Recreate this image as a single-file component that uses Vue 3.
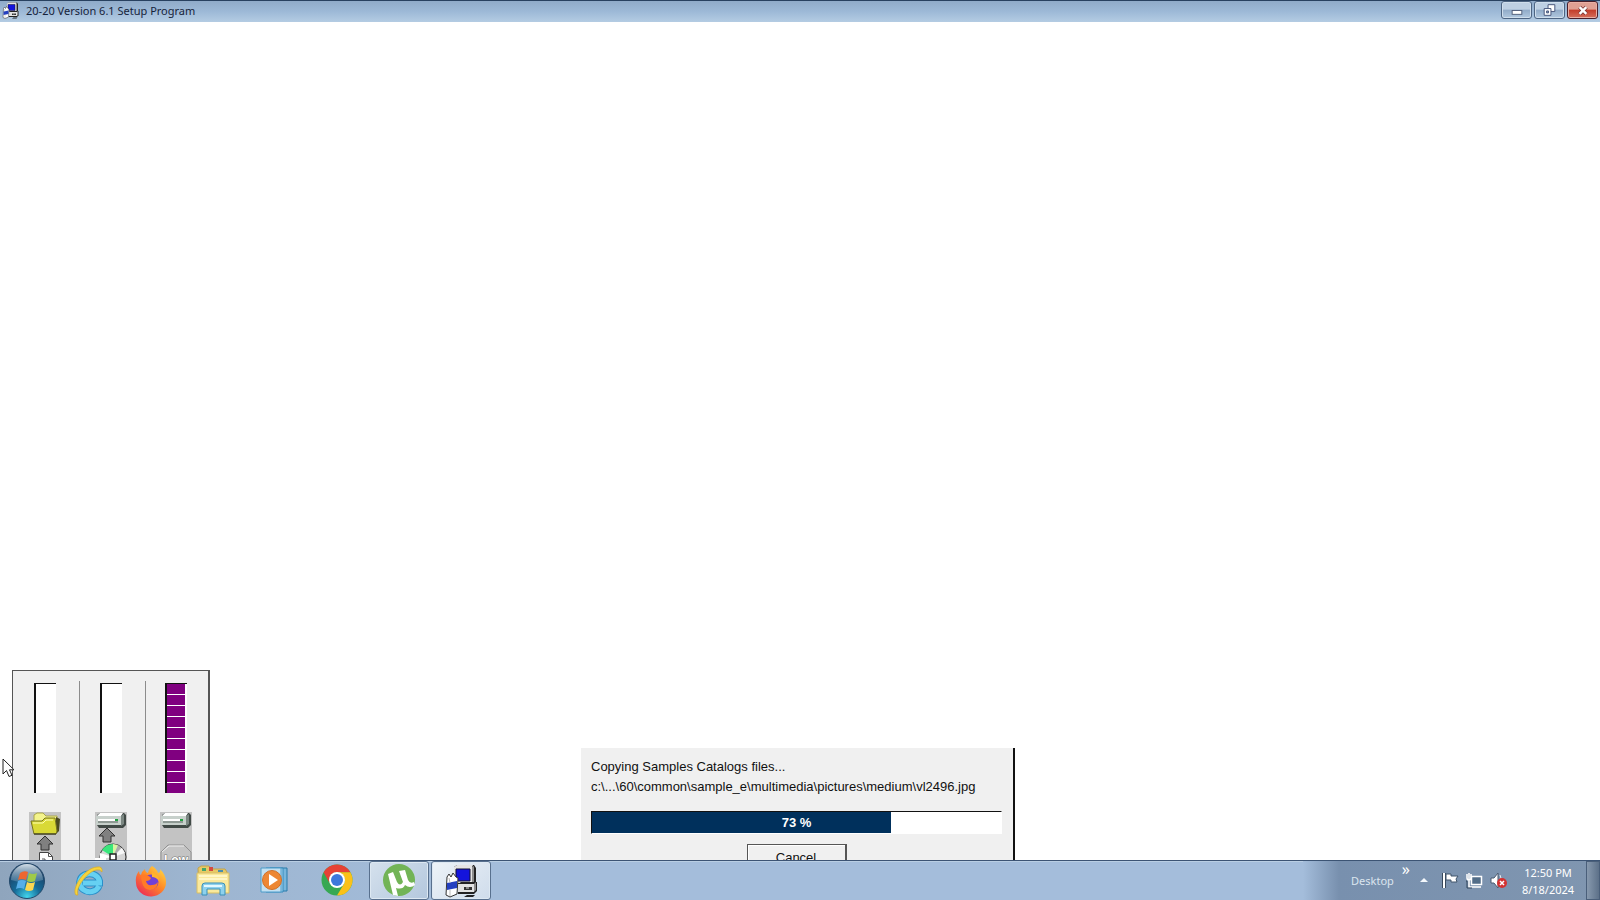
<script setup>
import { ref } from 'vue'

const percent = ref(73)
const gauges = [
  { id: 'file', label: 'File progress', segments: 0 },
  { id: 'disk', label: 'Disk progress', segments: 0 },
  { id: 'space', label: 'Disk space', segments: 10 },
]
const apps = [
  { id: 'ie', name: 'Internet Explorer', open: false },
  { id: 'firefox', name: 'Firefox', open: false },
  { id: 'explorer', name: 'Windows Explorer', open: false },
  { id: 'wmp', name: 'Windows Media Player', open: false },
  { id: 'chrome', name: 'Google Chrome', open: false },
  { id: 'utorrent', name: 'uTorrent', open: true },
  { id: 'setup', name: '20-20 Setup', open: true },
]
</script>

<template>
  <div class="screen">
    <header class="titlebar">
      <svg class="title-icon" viewBox="0 0 34 34" aria-hidden="true">
        <use href="#setup-glyph" />
      </svg>
      <h1 class="title">20-20 Version 6.1 Setup Program</h1>
      <div class="controls">
        <button class="control" type="button" aria-label="Minimize">
          <svg width="30" height="16" viewBox="0 0 30 16"><rect x="10.500" y="8.500" width="10" height="4" fill="#fff" stroke="#53617c" /></svg>
        </button>
        <button class="control" type="button" aria-label="Restore">
          <svg width="30" height="16" viewBox="0 0 30 16">
            <path d="M13.500 2.500h7v7h-7z" fill="#fff" stroke="#46557a" />
            <path d="M9.500 6.500h7v7h-7z" fill="#fff" stroke="#46557a" />
            <path d="M12 9h2v2h-2z" fill="#8ba3c3" stroke="#46557a" />
          </svg>
        </button>
        <button class="control close" type="button" aria-label="Close">
          <svg width="30" height="16" viewBox="0 0 30 16">
            <path d="M12 5l7 7M19 5l-7 7" stroke="#7b3434" stroke-width="4" />
            <path d="M12 5l7 7M19 5l-7 7" stroke="#fff" stroke-width="2.500" />
          </svg>
        </button>
      </div>
    </header>

    <main class="workspace">
      <section class="gauges" aria-label="Copy gauges">
        <div v-for="g in gauges" :key="g.id" class="gauge-column">
          <div class="gauge" role="img" :aria-label="g.label">
            <span v-for="n in g.segments" :key="n" class="segment"></span>
          </div>
          <div class="gauge-icon">
            <svg v-if="g.id === 'file'" width="32" height="64" viewBox="0 0 32 64" aria-hidden="true">
              <path d="M5 11V3l3-2h6l3 3h11v8z" fill="#f4f48c" stroke="#aaa54a" />
              <path d="M27 5l4 2-1 12-3 3z" fill="#4b4a20" />
              <path d="M2 9h11l3-3h10l2 13-1 3H5z" fill="#d9d936" stroke="#77751e" />
              <path d="M4 11h10l3-3h7" fill="none" stroke="#ffffb2" />
              <path d="M5 22h22" stroke="#222" />
              <path d="M16 24l8 8h-4v6h-8v-6H8z" fill="#808080" stroke="#303030" />
              <path d="M10.500 40.500h9l4 4V62h-13z" fill="#fff" stroke="#444" />
              <path d="M19.500 40.500v4h4M13 47h3v3h3" fill="none" stroke="#555" />
            </svg>
            <svg v-else width="32" height="64" viewBox="0 0 32 64" aria-hidden="true">
              <path d="M2 3l3-2h24l2 2v10l-3 3H4l-2-3z" fill="#414a46" />
              <path d="M2 4l3-3h23l-2 3z" fill="#fff" />
              <path d="M1 4h25v9H1z" fill="#c7d0cb" />
              <path d="M26 4l3-2v10l-3 2z" fill="#7b8782" />
              <path d="M3 8h20" stroke="#fff" stroke-width="2" />
              <path d="M3 10h20" stroke="#56625d" />
              <path d="M20 7h3v2h-3z" fill="#20a040" />
              <template v-if="g.id === 'disk'">
                <path d="M12 16l8 8h-4v6H8v-6H4z" fill="#808080" stroke="#303030" />
                <circle cx="18" cy="45" r="13" fill="#d5d5d5" stroke="#333" />
                <path d="M18 45L7 38q4-6 11-6z" fill="#39e67b" />
                <path d="M18 45V32l5 1z" fill="#d6f5a1" />
                <path d="M18 45L5 47V41z" fill="#fff" />
                <path d="M18 45l9-9 3 5z" fill="#f7f7f7" />
                <path d="M18 45L23 33l3 3z" fill="#aaa" />
                <rect x="15" y="42" width="6" height="6" fill="#fff" stroke="#222" stroke-width="1.500" />
                <path d="M0 46h11v6H0z" fill="#fff" />
              </template>
              <template v-else>
                <path d="M8 33h16l7 7v17l-7 7H8l-7-7V40z" fill="#c4c4c4" stroke="#929292" />
                <path d="M2 40l7-6h15" fill="none" stroke="#eee" />
                <text x="16" y="52" text-anchor="middle" class="low">Low</text>
              </template>
            </svg>
          </div>
        </div>
      </section>

      <section class="dialog" role="dialog" aria-label="Copying files">
        <p class="line">Copying Samples Catalogs files...</p>
        <p class="line">c:\...\60\common\sample_e\multimedia\pictures\medium\vl2496.jpg</p>
        <div class="progress" role="progressbar" :aria-valuenow="percent" aria-valuemin="0" aria-valuemax="100" aria-label="Copying">
          <div class="fill" :style="{ width: percent + '%' }"></div>
          <span class="percent">{{ percent }} %</span>
        </div>
        <button class="cancel" type="button">Cancel</button>
      </section>

      <svg class="cursor" width="14" height="20" viewBox="0 0 14 20" aria-hidden="true">
        <path d="M1 1v15l3.500-3.500 2.500 6 3-1.200-2.500-5.500H12z" fill="#fff" stroke="#222" />
      </svg>
    </main>

    <footer class="taskbar">
      <button class="start" type="button" aria-label="Start">
        <svg width="38" height="38" viewBox="0 0 38 38">
          <defs>
            <radialGradient id="orb" cx="50%" cy="95%" r="85%">
              <stop offset="0" stop-color="#42d5ec" /><stop offset=".45" stop-color="#156b98" /><stop offset="1" stop-color="#1d3c60" />
            </radialGradient>
            <linearGradient id="shine" x2="0" y2="1"><stop offset="0" stop-color="#e5f0f7" stop-opacity=".9" /><stop offset="1" stop-color="#7ca1bd" stop-opacity=".35" /></linearGradient>
          </defs>
          <circle cx="19" cy="19" r="17.500" fill="url(#orb)" stroke="#23496b" />
          <path d="M3 18a16 16 0 0132 0q-16 5-32 0z" fill="url(#shine)" />
          <path d="M12 11q4-3 8-1l-2 8q-4-2-8 0z" fill="#ed6730" />
          <path d="M21 11q4 2 8 0l-2 8q-4 2-8 0z" fill="#9fca48" />
          <path d="M10 19q4-2 8 0l-2 8q-4-2-8 0z" fill="#57aee8" />
          <path d="M19 20q4 2 8 0l-2 8q-4 2-8 0z" fill="#fbd651" />
        </svg>
      </button>
      <nav class="apps" aria-label="Taskbar">
        <button v-for="a in apps" :key="a.id" type="button" class="app" :class="{ open: a.open }" :aria-label="a.name">
          <svg v-if="a.id === 'ie'" width="34" height="34" viewBox="0 0 34 34">
            <path d="M27 22a10 9 0 11.500-5v2H11" fill="none" stroke="#2b8fc9" stroke-width="7" />
            <path d="M27 22a10 9 0 11.500-5v2H11" fill="none" stroke="#66d0f2" stroke-width="5" />
            <path d="M4 31C-1 25 12 4 25 3q6-1 5 5-2-3-6-2C15 8 3 24 6 31z" fill="#f6d33b" stroke="#d5a928" stroke-width=".700" />
          </svg>
          <svg v-else-if="a.id === 'firefox'" width="34" height="34" viewBox="0 0 34 34">
            <defs><linearGradient id="fox" x1="1" y1="0" x2=".2" y2="1"><stop offset="0" stop-color="#ffe64a" /><stop offset=".5" stop-color="#ff8a26" /><stop offset="1" stop-color="#ed2857" /></linearGradient></defs>
            <path d="M18 2q5 3 6 7 3-1 2-4 6 6 6 13a15 14 0 01-30 1Q1 12 5 7q0 3 2 4 1-4 4-6 0 3 3 4 1-5 4-7z" fill="url(#fox)" />
            <circle cx="17" cy="18" r="7.500" fill="#7040d8" />
            <path d="M7 11q6-2 10 3-1 3-5 3 1 5 6 4 4 0 6-3-1 8-8 8-7-1-8-8-1-3-1-7z" fill="#ff7b28" />
            <path d="M18 8q7 3 7 9-3-4-7-4z" fill="#ffb42e" />
          </svg>
          <svg v-else-if="a.id === 'explorer'" width="36" height="34" viewBox="0 0 36 34">
            <path d="M3 4l3-2h8l2 3h14l2 3v20H4z" fill="#e7c965" stroke="#c1a34d" />
            <path d="M7 4h4v3H7z" fill="#45a56a" /><path d="M14 3h4v4h-4z" fill="#d54b3f" /><path d="M23 6h5v2h-5z" fill="#4c8fac" />
            <path d="M2 9h32v20H2z" fill="#fae99c" stroke="#d8be64" />
            <path d="M4 12h28M4 15h28" stroke="#fff6c6" stroke-width="2" />
            <path d="M7 31V22q0-3 3-3h17q3 0 3 3v9h-5v-6H12v6z" fill="#8ed1ec" stroke="#398fb9" />
            <path d="M9 22h18" stroke="#e3f8ff" stroke-width="2" />
          </svg>
          <svg v-else-if="a.id === 'wmp'" width="34" height="34" viewBox="0 0 34 34">
            <path d="M12 4h17v23H12z" fill="#78b6dc" stroke="#287ba9" />
            <path d="M8 4h17v24H8z" fill="#a4d3ed" stroke="#3489bb" />
            <path d="M3 4h20v24H3z" fill="#c3e0f1" stroke="#4d9cca" />
            <circle cx="14" cy="16" r="9.500" fill="#ed8734" stroke="#cf722b" />
            <path d="M11 10l9 6-9 6z" fill="#fff" />
          </svg>
          <svg v-else-if="a.id === 'chrome'" width="34" height="34" viewBox="0 0 34 34">
            <circle cx="17" cy="16" r="15.500" fill="#36a853" />
            <path d="M3.600 8.200A15.500 15.500 0 0130.400 8.200H17a8 8 0 00-6.900 11.800z" fill="#e64235" />
            <path d="M30.400 8.200A15.500 15.500 0 0117 31.500L23.900 20A8 8 0 0017 8.200z" fill="#fbc118" />
            <circle cx="17" cy="16" r="8" fill="#fff" /><circle cx="17" cy="16" r="6" fill="#3c78dc" />
          </svg>
          <svg v-else-if="a.id === 'utorrent'" width="34" height="34" viewBox="0 0 34 34">
            <circle cx="17" cy="16" r="16" fill="#72b456" />
            <path d="M6 10l5-2 4 10q3 5 6 0l-4-11 6-1 3 10q2 4 6 2l1 3q-5 4-10 0-2 5-9 3l2 8-5-1z" fill="#fff" />
          </svg>
          <svg v-else width="34" height="34" viewBox="0 0 34 34">
            <g id="setup-glyph">
              <path d="M10 3l3-2h17l2 3v15l-3 3H11z" fill="#222" />
              <path d="M10 3l3-2h16l-1 2v16H10z" fill="#e4e4e4" />
              <path d="M12 5h14v12H12z" fill="#1414dc" stroke="#101030" />
              <path d="M28 3l2-1v16l-2 1z" fill="#8d8d8d" />
              <path d="M14 20l3-2h16v9l-3 3H14z" fill="#222" />
              <path d="M14 20h16v8H14z" fill="#e2e2e2" />
              <path d="M30 20l2-2v8l-2 2z" fill="#8d8d8d" />
              <path d="M20 23h8v3h-8z" fill="#333" />
              <path d="M22 24h3" stroke="#ddd" />
              <path d="M20 33l3-2h8l-2 2z" fill="#222" />
              <path d="M3 13l2-3 2 3 2-4 3 4 2 1-1 16-7 3-4-2z" fill="#fff" stroke="#333" />
              <path d="M3 19l10-2v7l-10 2z" fill="#2440c0" />
              <path d="M5 14l1 5M6 26v6" stroke="#bbb" />
            </g>
          </svg>
        </button>
      </nav>
      <div class="tray">
        <span class="desktop">Desktop</span>
        <button class="more" type="button" aria-label="More toolbars">»</button>
        <button class="tray-icon arrow" type="button" aria-label="Show hidden icons">
          <svg width="8" height="5" viewBox="0 0 8 5"><path d="M4 0l4 4H0z" fill="#f4f8fc" /></svg>
        </button>
        <button class="tray-icon" type="button" aria-label="Action Center">
          <svg width="17" height="17" viewBox="0 0 17 17"><path d="M2 1v15" stroke="#38495c" stroke-width="4" /><path d="M2 1v15" stroke="#fff" stroke-width="2" /><path d="M4 2h5v2h7l-2 3 1 3H9V8H4z" fill="#fff" stroke="#40546a" /></svg>
        </button>
        <button class="tray-icon" type="button" aria-label="Network">
          <svg width="17" height="17" viewBox="0 0 17 17"><path d="M5.500 4.500h10v8h-10zM7 15h8" fill="#526d88" stroke="#fff" stroke-width="1.500" /><path d="M1 2v4q0 2 2 2t2-2V2M3 1v14h4" fill="none" stroke="#fff" stroke-width="1.500" /><path d="M0 9h1v7h5" fill="none" stroke="#33475d" /></svg>
        </button>
        <button class="tray-icon" type="button" aria-label="Volume muted">
          <svg width="17" height="17" viewBox="0 0 17 17"><path d="M1 6h3l4-5v15l-4-5H1z" fill="#fff" stroke="#4a5b70" /><path d="M10 3q3 5 0 10" fill="none" stroke="#eee" /><circle cx="12" cy="11" r="5" fill="#d33232" /><path d="M10 9l4 4m0-4l-4 4" stroke="#fff" stroke-width="1.500" /></svg>
        </button>
        <div class="clock"><span>12:50 PM</span><span>8/18/2024</span></div>
        <button class="show-desktop" type="button" aria-label="Show desktop"></button>
      </div>
    </footer>
  </div>
</template>

<style>
body { margin: 0; }
</style>

<style scoped>
.screen {
  display: flex;
  flex-direction: column;
  height: 100vh;
  overflow: hidden;
  background: #fff;
  font-family: "Noto Sans", "Open Sans", sans-serif;
}
button {
  box-sizing: border-box;
  margin: 0;
  padding: 0;
  border: 0;
  background: none;
  font: inherit;
}
svg { display: block; }
.titlebar {
  display: flex;
  flex: none;
  box-sizing: border-box;
  height: 22px;
  padding-left: 2px;
  border-top: 1px solid #284160;
  background: linear-gradient(#90abc9, #9db9d7 50%, #b4cce3);
}
.title-icon { width: 17px; height: 17px; margin-top: 1px; }
.title {
  flex: 1;
  margin: 0 0 0 7px;
  color: #16233a;
  font-size: 11px;
  font-weight: 400;
  line-height: 20px;
}
.controls { display: flex; gap: 2px; padding-right: 2px; }
.control {
  display: flex;
  align-items: center;
  justify-content: center;
  width: 31px;
  height: 18px;
  border: 1px solid #4d6482;
  border-radius: 3px;
  background: linear-gradient(#bed0e3 45%, #91abc8 50%, #b1c8df);
  box-shadow: inset 0 0 0 1px #cfdeec;
}
.close {
  border-color: #4a1f2a;
  background: linear-gradient(#e0a093 45%, #c33c29 50%, #d5705d);
  box-shadow: inset 0 0 0 1px #e9b0a5;
}
.workspace { position: relative; flex: 1; min-height: 0; overflow: hidden; }
.gauges {
  position: absolute;
  bottom: -27px;
  left: 12px;
  display: grid;
  grid-template-columns: 66px 66px 1fr;
  box-sizing: border-box;
  width: 198px;
  padding: 10px 0;
  border: 1px solid #555;
  border-right-width: 2px;
  background: #f0f0f0;
}
.gauge-column {
  display: flex;
  flex-direction: column;
  align-items: center;
  gap: 19px;
  padding: 2px 3px 0 0;
}
.gauge-column + .gauge-column { border-left: 1px solid #8c8c8c; }
.gauge {
  display: flex;
  flex-direction: column;
  gap: 1px;
  box-sizing: border-box;
  width: 22px;
  height: 110px;
  padding-right: 2px;
  border-top: 1px solid #111;
  border-left: 2px solid #111;
  background: #fff;
}
.segment { flex: 1; background: #800080; }
.gauge-icon { background: #c3c3c3; }
.low { fill: #fff; stroke: #777; stroke-width: 1px; paint-order: stroke; font: 700 12px "Liberation Sans", Arial, sans-serif; }
.dialog {
  position: absolute;
  bottom: -20px;
  left: 581px;
  box-sizing: border-box;
  width: 434px;
  height: 132px;
  padding: 9px 11px 0 10px;
  border-right: 2px solid #111;
  background: #f0f0f0;
  color: #111;
  font-family: "Liberation Sans", Arial, sans-serif;
  font-size: 13px;
}
.line { margin: 0; line-height: 20px; white-space: nowrap; }
.progress {
  position: relative;
  box-sizing: border-box;
  height: 23px;
  margin-top: 14px;
  border: 1px solid #fff;
  border-top-color: #111;
  border-left-color: #111;
  background: #fff;
}
.fill { height: 100%; background: #00305c; }
.percent {
  position: absolute;
  inset: 0;
  color: #fff;
  font-weight: 700;
  line-height: 21px;
  text-align: center;
}
.cancel {
  display: block;
  width: 100px;
  height: 26px;
  margin: 10px auto 0;
  border: 1px solid #555;
  border-right-width: 2px;
  background: #f0f0f0;
  box-shadow: inset 1px 1px #fff;
  color: #111;
}
.cursor { position: absolute; bottom: 82px; left: 2px; }
.taskbar {
  display: flex;
  flex: none;
  box-sizing: border-box;
  height: 40px;
  border-top: 1px solid #3c5474;
  background: linear-gradient(90deg, #8fa5bd, #9db5d0 12%, #a4bddb 30%, #a4bddb);
  box-shadow: inset 0 1px #b9cee3;
}
.start { width: 59px; padding-left: 8px; }
.apps { display: flex; flex: 1; gap: 2px; }
.app {
  display: flex;
  align-items: center;
  justify-content: center;
  width: 60px;
  border-radius: 3px;
}
.open {
  border: 1px solid #58708e;
  background: linear-gradient(135deg, #d5e1ed, #b3c7dd);
  box-shadow: inset 0 0 0 1px #dde8f2;
}
.open:last-child { background: linear-gradient(135deg, #edf3f8, #cfdceb); }
.tray {
  display: flex;
  align-items: center;
  padding-left: 48px;
  background: linear-gradient(90deg, #a4bddb, #7890ae 36px, #8096b0);
  color: #fff;
  font-size: 11px;
}
.desktop { color: #dbe5ef; }
.more { align-self: flex-start; margin-left: 8px; color: #fff; font-size: 16px; line-height: 16px; }
.tray-icon { display: flex; align-items: center; justify-content: center; width: 24px; height: 24px; }
.arrow { width: 28px; }
.clock {
  display: flex;
  flex-direction: column;
  align-items: center;
  width: 76px;
  line-height: 17px;
}
.show-desktop {
  align-self: stretch;
  width: 14px;
  border: 1px solid #4a5f7a;
  background: linear-gradient(90deg, #8799ae, #5d7189);
}
</style>
